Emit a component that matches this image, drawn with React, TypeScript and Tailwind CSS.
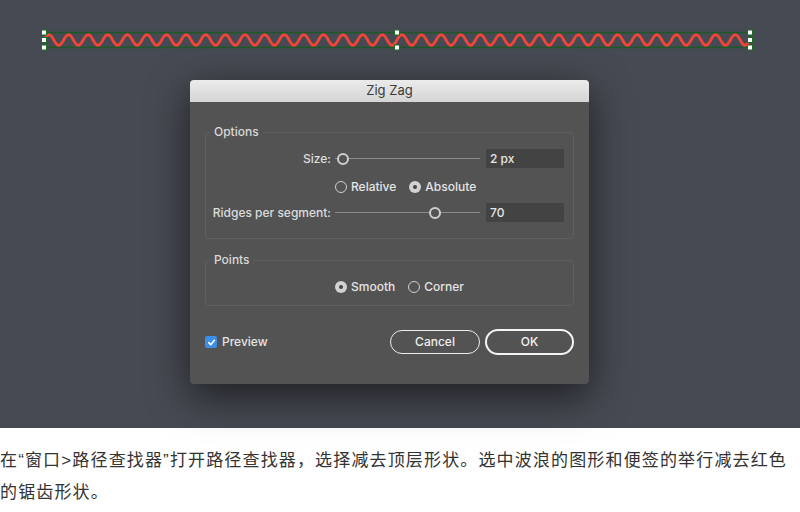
import React from 'react';

const CYCLES = 36;
const X0 = 44;
const X1 = 750;

function wavePath() {
  const w = (X1 - X0) / CYCLES;
  let d = `M ${X0} 40`;
  for (let i = 0; i < CYCLES; i++) {
    const x = X0 + i * w;
    d += ` C ${x + w * 0.18} 33, ${x + w * 0.32} 33, ${x + w / 2} 40`;
    d += ` S ${x + w * 0.82} 47, ${x + w} 40`;
  }
  return d;
}

const Handle = ({ x, y }: { x: number; y: number }) => (
  <rect x={x - 2.5} y={y - 2.5} width={5} height={5} fill="#ffffff" stroke="#1d6b27" strokeWidth={1} />
);

const Wave = () => (
  <svg width={800} height={60} className="block">
    <rect x={X0} y={32.5} width={X1 - X0} height={15} fill="none" stroke="#1c5a24" strokeWidth={1.5} />
    <path d={wavePath()} fill="none" stroke="#f0463a" strokeWidth={2.8} strokeLinecap="round" />
    {[X0, 397, X1].map((x) => (
      <React.Fragment key={x}>
        <Handle x={x} y={32.5} />
        <Handle x={x} y={47.5} />
      </React.Fragment>
    ))}
    <Handle x={X0} y={40} />
    <Handle x={X1} y={40} />
  </svg>
);

const Radio = ({ on, label }: { on?: boolean; label: string }) => (
  <div className="flex items-center gap-[4px]">
    {on ? (
      <span className="flex h-[12px] w-[12px] items-center justify-center rounded-full bg-[#d2d2d2]">
        <span className="h-[4px] w-[4px] rounded-full bg-[#444]" />
      </span>
    ) : (
      <span className="h-[12px] w-[12px] rounded-full border border-[#cfcfcf]" />
    )}
    <span className="text-[12px] font-medium text-[#e4e4e4]">{label}</span>
  </div>
);

const Slider = ({ pct }: { pct: number }) => (
  <div className="relative h-[12px] w-[145px]">
    <div className="absolute left-0 right-0 top-[5.5px] h-px bg-[#8a8a8a]" />
    <span
      className="absolute top-0 h-[12px] w-[12px] rounded-full border-2 border-[#cfcfcf] bg-[#535353]"
      style={{ left: `calc(${pct}% - 6px)` }}
    />
  </div>
);

const Field = ({ value }: { value: string }) => (
  <div className="flex h-[19px] w-[78px] items-center bg-[#434343] px-[4px] text-[12px] font-medium text-[#e6e6e6]">
    {value}
  </div>
);

const Group = ({ title, children, className }: { title: string; children: React.ReactNode; className: string }) => (
  <fieldset className={`rounded-[4px] border border-[#5f5f5f] ${className}`}>
    <legend className="ml-[4px] px-[4px] text-[12px] leading-[14px] font-medium text-[#d8d8d8]">{title}</legend>
    {children}
  </fieldset>
);

const Row = ({ label, pct, value }: { label: string; pct: number; value: string }) => (
  <div className="flex h-[19px] items-center">
    <span className="w-[129px] pr-[4px] text-right text-[12px] font-medium whitespace-nowrap text-[#dcdcdc]">{label}</span>
    <Slider pct={pct} />
    <div className="ml-[6px]">
      <Field value={value} />
    </div>
  </div>
);

const Dialog = () => (
  <div className="w-[399px] overflow-hidden rounded-[4px] bg-[#535353] shadow-[0_12px_40px_rgba(0,0,0,0.6)]">
    <div className="flex h-[22px] items-center justify-center bg-gradient-to-b from-[#ebebeb] to-[#d5d5d5] text-[13px] text-[#3a3a3a]">
      Zig Zag
    </div>
    <div className="px-[15px] pt-[23px] pb-[29px]">
      <Group title="Options" className="h-[114px]">
        <div className="flex flex-col">
          <div className="mt-[10px]">
            <Row label="Size:" pct={5.5} value="2 px" />
          </div>
          <div className="mt-[10px] flex items-center gap-[13px] pl-[129px]">
            <Radio label="Relative" />
            <Radio on label="Absolute" />
          </div>
          <div className="mt-[7px]">
            <Row label="Ridges per segment:" pct={69} value="70" />
          </div>
        </div>
      </Group>
      <Group title="Points" className="mt-[14px] h-[53px]">
        <div className="mt-[11px] flex items-center gap-[13px] pl-[129px]">
          <Radio on label="Smooth" />
          <Radio label="Corner" />
        </div>
      </Group>
      <div className="mt-[23px] flex items-center">
        <div className="flex items-center gap-[5px]">
          <span className="flex h-[12px] w-[12px] items-center justify-center rounded-[2px] bg-[#3d8ee6]">
            <svg width="9" height="9" viewBox="0 0 10 10">
              <path d="M2 5.2 L4.2 7.4 L8.2 2.6" fill="none" stroke="#fff" strokeWidth="1.8" strokeLinecap="round" strokeLinejoin="round" />
            </svg>
          </span>
          <span className="text-[12px] font-medium text-[#e4e4e4]">Preview</span>
        </div>
        <div className="ml-auto flex items-center gap-[5px]">
          <button className="flex h-[24px] w-[90px] items-center justify-center rounded-full border border-[#ececec] text-[12px] font-medium text-[#eeeeee]">
            Cancel
          </button>
          <button className="flex h-[26px] w-[89px] items-center justify-center rounded-full border-2 border-[#f4f4f4] text-[12px] font-medium text-[#f4f4f4]">
            OK
          </button>
        </div>
      </div>
    </div>
  </div>
);

export default function App() {
  return (
    <div className="h-[512px] w-[800px] bg-white font-['Inter','Noto_Sans',sans-serif]">
      <div className="flex h-[428px] flex-col bg-[#464a52]">
        <Wave />
        <div className="mt-[20px] pl-[190px]">
          <Dialog />
        </div>
      </div>
      <div className="pt-[17px] text-[17px] leading-[32px] tracking-[1.15px] text-[#333] font-['Liberation_Sans','Noto_Sans_CJK_SC',sans-serif]">
        <p className="whitespace-nowrap">在“窗口&gt;路径查找器”打开路径查找器，选择减去顶层形状。选中波浪的图形和便签的举行减去红色</p>
        <p>的锯齿形状。</p>
      </div>
    </div>
  );
}
